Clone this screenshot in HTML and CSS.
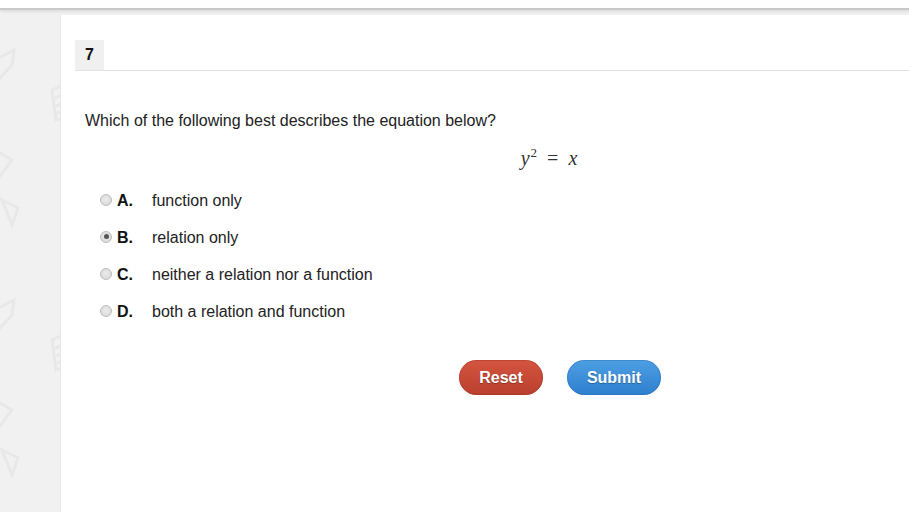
FILE: index.html
```html
<!DOCTYPE html>
<html>
<head>
<meta charset="utf-8">
<link rel="stylesheet" href="styles.css">
</head>
<body>
<div class="topbar"></div>
<div class="page">
  <div class="card">
    <div class="qhead"><span class="qnum">7</span></div>
    <div class="qbody">
      <p class="prompt">Which of the following best describes the equation below?</p>
      <div class="math"><span class="mi">y</span><sup class="sup">2</sup><span class="eq">=</span><span class="mi">x</span></div>
      <ul class="options">
        <li class="opt"><span class="radio"></span><span class="letter">A.</span><span class="text">function only</span></li>
        <li class="opt"><span class="radio checked"></span><span class="letter">B.</span><span class="text">relation only</span></li>
        <li class="opt"><span class="radio"></span><span class="letter">C.</span><span class="text">neither a relation nor a function</span></li>
        <li class="opt"><span class="radio"></span><span class="letter">D.</span><span class="text">both a relation and function</span></li>
      </ul>
      <div class="actions">
        <button class="btn reset">Reset</button>
        <button class="btn submit">Submit</button>
      </div>
    </div>
  </div>
</div>
</body>
</html>
```
FILE: styles.css
```css
html, body {
  margin: 0;
  padding: 0;
  height: 100%;
  overflow: hidden;
}
body {
  background-color: #f1f1f1;
  background-image: url("data:image/svg+xml;utf8,<svg xmlns='http://www.w3.org/2000/svg' width='60' height='250'><g fill='none' stroke='%23e8e8e8' stroke-width='3'><path d='M-5 40 L14 30 L12 45 L-2 60'/><path d='M52 70 L70 62 L72 95 L56 100 Z'/><path d='M55 78 L68 73 M56 86 L69 81 M57 93 L69 89'/><path d='M-5 130 L12 140 L-3 160'/><path d='M2 180 L18 188 L12 205 Z'/></g></svg>");
  background-repeat: repeat-y;
  background-position: 0 20px;
  font-family: "Liberation Sans", Arial, sans-serif;
  color: #222;
}
.topbar {
  height: 8px;
  background: #fff;
  border-bottom: 2px solid #c9c9c9;
  box-shadow: 0 2px 3px rgba(0,0,0,0.08);
  position: relative;
}
.page {
  padding: 5px 0 0 60px;
  height: calc(100% - 10px);
  box-sizing: border-box;
}
.card {
  background: #fff;
  border-left: 1px solid #e6e6e6;
  height: 100%;
  padding-top: 25px;
  box-sizing: border-box;
  overflow: hidden;
}
.qhead {
  margin-left: 14px;
  border-bottom: 1px solid #e2e2e2;
  height: 30px;
  display: flex;
}
.qnum {
  width: 29px;
  background: #f0f0f0;
  font-weight: bold;
  font-size: 16px;
  color: #111;
  display: flex;
  align-items: center;
  padding-left: 10px;
  box-sizing: border-box;
}
.qbody {
  padding-left: 24px;
}
.prompt {
  margin: 41px 0 0 0;
  font-size: 16px;
  line-height: 18px;
}
.math {
  display: flex;
  align-items: baseline;
  justify-content: center;
  width: 928px;
  margin-top: 17px;
  font-family: "Liberation Serif", serif;
  font-size: 20px;
  color: #333;
  height: 21px;
}
.mi { font-style: italic; }
.sup { font-size: 13px; position: relative; top: -8px; margin-left: 1px; vertical-align: baseline; }
.eq { margin: 0 10px 0 10px; font-style: normal; }
.options {
  list-style: none;
  margin: 14px 0 0 15px;
  padding: 0;
}
.opt {
  display: flex;
  align-items: center;
  height: 37px;
  font-size: 16px;
}
.radio {
  width: 12px;
  height: 12px;
  border-radius: 50%;
  border: 1px solid #bdbdbd;
  background: radial-gradient(circle at 50% 45%, #ececec 0%, #dcdcdc 70%, #cfcfcf 100%);
  box-sizing: border-box;
  position: relative;
  margin-right: 5px;
  margin-top: -2px;
}
.radio.checked::after {
  content: "";
  position: absolute;
  left: 2.5px;
  top: 2.5px;
  width: 5px;
  height: 5px;
  border-radius: 50%;
  background: #555;
}
.letter {
  font-weight: bold;
  width: 35px;
  color: #111;
}
.text { color: #222; }
.actions {
  display: flex;
  justify-content: center;
  gap: 24px;
  width: 950px;
  margin-top: 30px;
}
.btn {
  font-family: "Liberation Sans", Arial, sans-serif;
  font-weight: bold;
  font-size: 16px;
  color: #fff;
  border: none;
  border-radius: 18px;
  height: 35px;
  padding: 0;
  text-shadow: 0 1px 1px rgba(0,0,0,0.3);
}
.reset {
  width: 84px;
  background: linear-gradient(#d4553f, #b93f2f);
  box-shadow: inset 0 0 0 1px rgba(150,40,30,0.3);
}
.submit {
  width: 94px;
  background: linear-gradient(#4d9fe3, #2e7fce);
  box-shadow: inset 0 0 0 1px rgba(30,90,160,0.3);
}
```
